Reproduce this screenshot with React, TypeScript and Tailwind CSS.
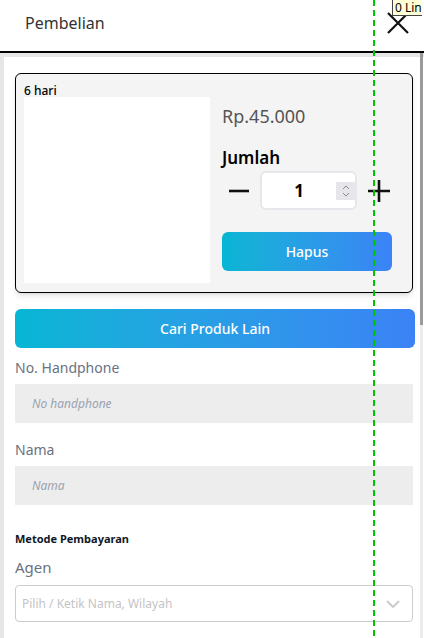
import { FC } from "react";

const font = { fontFamily: '"Noto Sans", "Open Sans", sans-serif' };

const Field: FC<{ label: string; placeholder: string; className?: string }> = ({
  label,
  placeholder,
  className,
}) => (
  <div className={className}>
    <p className="text-[14px] leading-[20px] text-[#6b7280]">{label}</p>
    <div className="mt-[6px] h-[39px] w-[398px] bg-[#ededed] flex items-center pl-[17px]">
      <span className="text-[12px] italic text-[#9ca3af]">{placeholder}</span>
    </div>
  </div>
);

export default function App() {
  return (
    <div
      className="relative w-[424px] h-[638px] overflow-hidden bg-white"
      style={font}
    >
      {/* header */}
      <div className="h-[53px] flex items-center justify-between pl-[25px] pr-[15px] pb-[6px] border-b-2 border-black">
        <h2 className="text-[16px] text-[#333]">Pembelian</h2>
        <svg width="22" height="22" viewBox="0 0 22 22">
          <path d="M1 1 L21 21 M21 1 L1 21" stroke="#111" strokeWidth="2.2" />
        </svg>
      </div>

      {/* body */}
      <div className="border-l-4 border-t-4 border-[#e6e6e6] pl-[11px] pt-[16px] pr-[11px] h-[585px]">
        <div className="w-[398px] h-[220px] rounded-[6px] border border-black bg-[#f4f4f4] shadow-md px-[8px] pt-[10px] flex flex-col">
          <p className="text-[12px] leading-[13px] font-medium text-black">6 hari</p>
          <div className="flex gap-[12px]">
            <div className="w-[186px] h-[186px] bg-white" />
            <div className="flex flex-col">
              <p className="mt-[5px] text-[18px] leading-[28px] text-[#555]">Rp.45.000</p>
              <p className="mt-[16px] text-[17px] leading-[24px] font-semibold text-black">Jumlah</p>
              <div className="mt-[1px] flex items-center">
                <div className="w-[38px] flex pl-[6px]">
                  <svg width="22" height="22" viewBox="0 0 22 22">
                    <path d="M1 11 H21" stroke="#111" strokeWidth="2.6" />
                  </svg>
                </div>
                <div className="w-[97px] h-[39px] rounded-[6px] border-2 border-[#e5e7eb] bg-white flex items-center">
                  <span className="flex-1 text-center text-[17px] font-bold text-black">1</span>
                  <div className="w-[19px] h-[18px] bg-[#e6e6ea] flex items-center justify-center">
                    <svg width="10" height="14" viewBox="0 0 10 14">
                      <path d="M2 5 L5 2 L8 5 M2 9 L5 12 L8 9" stroke="#8a8a8a" strokeWidth="1" fill="none" />
                    </svg>
                  </div>
                </div>
                <div className="ml-[11px]">
                  <svg width="22" height="22" viewBox="0 0 22 22">
                    <path d="M0 11 H22 M11 0 V22" stroke="#111" strokeWidth="2.6" />
                  </svg>
                </div>
              </div>
              <button className="mt-[22px] w-[170px] h-[39px] rounded-[6px] bg-gradient-to-r from-[#06b6d4] to-[#3b82f6] text-white text-[14px] font-medium">
                Hapus
              </button>
            </div>
          </div>
        </div>

        <button className="mt-[16px] w-[400px] h-[39px] rounded-[6px] bg-gradient-to-r from-[#06b6d4] to-[#3b82f6] text-white text-[14px] font-medium">
          Cari Produk Lain
        </button>

        <Field className="mt-[10px]" label="No. Handphone" placeholder="No handphone" />
        <Field className="mt-[17px]" label="Nama" placeholder="Nama" />

        <p className="mt-[26px] text-[11px] leading-[16px] font-bold text-[#111827]">
          Metode Pembayaran
        </p>
        <p className="mt-[10px] text-[15px] leading-[20px] text-[#6b7280]">Agen</p>
        <div className="mt-[8px] w-[398px] h-[37px] rounded-[4px] border border-[#cccccc] flex items-center justify-between pl-[6px] pr-[12px]">
          <span className="text-[12px] text-[#c4c4c4]">Pilih / Ketik Nama, Wilayah</span>
          <svg width="14" height="10" viewBox="0 0 14 10">
            <path d="M1 2 L7 8 L13 2" stroke="#cccccc" strokeWidth="2" fill="none" />
          </svg>
        </div>
      </div>

      {/* scrollbar */}
      <div className="absolute right-[1px] top-[53px] w-[3px] h-[272px] bg-[#9a9a9a]" />
      <div className="absolute right-[1px] top-[325px] w-[3px] h-[313px] bg-[#ececec]" />

      {/* dev overlays */}
      <svg className="absolute left-[373px] top-0" width="2" height="638">
        <line x1="1" y1="0" x2="1" y2="638" stroke="#00c400" strokeWidth="2" strokeDasharray="6 4" />
      </svg>
      <div className="absolute left-[392px] top-0 h-[16px] pl-[2px] bg-[#ffffd6] border-l border-b border-[#444] text-[12px] leading-[15px] text-black whitespace-nowrap">
        0 Lin
      </div>
    </div>
  );
}
